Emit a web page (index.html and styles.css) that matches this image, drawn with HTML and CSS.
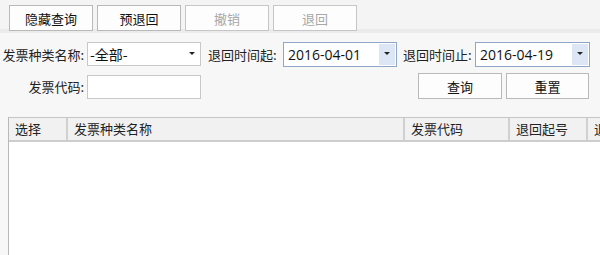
FILE: index.html
```html
<!DOCTYPE html>
<html lang="zh-CN">
<head>
    <meta charset="UTF-8">
    <title>发票退回</title>
    <link rel="stylesheet" href="styles.css">
</head>
<body>
    <div class="toolbar">
        <button class="tool-btn">隐藏查询</button>
        <button class="tool-btn">预退回</button>
        <button class="tool-btn" disabled>撤销</button>
        <button class="tool-btn" disabled>退回</button>
    </div>

    <div class="query">
        <div class="row">
            <label class="label wide">发票种类名称:</label>
            <div class="select">
                <span>-全部-</span>
                <span class="arrow"></span>
            </div>
            <label class="label mid">退回时间起:</label>
            <div class="date">
                <span>2016-04-01</span>
                <span class="drop"><span class="arrow"></span></span>
            </div>
            <label class="label mid2">退回时间止:</label>
            <div class="date last">
                <span>2016-04-19</span>
                <span class="drop"><span class="arrow"></span></span>
            </div>
        </div>
        <div class="row second">
            <label class="label wide">发票代码:</label>
            <div class="text-input"></div>
            <div class="actions">
                <button class="btn">查询</button>
                <button class="btn">重置</button>
            </div>
        </div>
    </div>

    <div class="grid">
        <div class="grid-head">
            <div class="col c1">选择</div>
            <div class="col c2">发票种类名称</div>
            <div class="col c3">发票代码</div>
            <div class="col c4">退回起号</div>
            <div class="col c5">退回止号</div>
        </div>
        <div class="grid-body"></div>
    </div>
</body>
</html>
```

FILE: styles.css
```css
body {
    margin: 0;
    width: 600px;
    height: 255px;
    overflow: hidden;
    background-color: #f7f7f7;
    font-family: "Microsoft YaHei", "Noto Sans CJK SC", sans-serif;
    font-size: 13px;
    color: #111;
}

.toolbar {
    height: 33px;
    padding: 5px 0 0 9px;
    box-sizing: border-box;
    display: flex;
    gap: 4px;
    background-color: #f4f4f4;
    border-bottom: 4px solid #ebebeb;
}

.tool-btn, .btn {
    flex: none;
    width: 84px;
    height: 26px;
    padding: 0;
    background-color: #fdfdfd;
    border: 1px solid #b9b9b9;
    font-family: inherit;
    font-size: 13px;
    color: #111;
}

.tool-btn:disabled {
    color: #a8a8a8;
    border-color: #c6c6c6;
}

.query {
    padding: 9px 0 0 2px;
}

.row {
    display: flex;
    align-items: center;
    height: 24px;
}

.row > * {
    flex: none;
}

.row.second {
    margin-top: 7px;
    height: 26px;
}

.label {
    color: #222;
    white-space: nowrap;
}

.wide {
    width: 82px;
    margin-right: 3px;
    text-align: right;
}

.mid {
    margin-left: 7px;
    width: 72px;
    margin-right: 3px;
}

.mid2 {
    margin-left: 6px;
    width: 69px;
    margin-right: 3px;
}

.select, .text-input {
    width: 114px;
    height: 24px;
    box-sizing: border-box;
    background-color: #fff;
    border: 1px solid #c8c8c8;
}

.select {
    display: flex;
    align-items: center;
    justify-content: space-between;
    padding: 0 5px 0 2px;
    font-size: 14px;
}

.text-input {
    margin-top: 1px;
}

.arrow {
    width: 0;
    height: 0;
    border-left: 3px solid transparent;
    border-right: 3px solid transparent;
    border-top: 3px solid #222;
    margin-top: -2px;
}

.date {
    width: 114px;
    height: 25px;
    box-sizing: border-box;
    display: flex;
    align-items: center;
    justify-content: space-between;
    padding: 1px 1px 1px 4px;
    background-color: #fff;
    border: 1px solid #8fa6c6;
    font-family: "Segoe UI", "Open Sans", "Noto Sans", sans-serif;
    font-size: 14px;
}

.date.last {
    width: 115px;
}

.drop {
    width: 16px;
    height: 21px;
    display: flex;
    align-items: center;
    justify-content: center;
    background-color: #dce6f4;
}

.actions {
    display: flex;
    gap: 4px;
    margin-left: 217px;
}

.actions .btn:last-child {
    width: 83px;
}

.grid {
    margin: 18px 0 0 8px;
    width: 592px;
    height: 200px;
    overflow: hidden;
    background-color: #fff;
    border-left: 1px solid #b8b8b8;
}

.grid-head {
    display: flex;
    width: 680px;
    height: 25px;
    box-sizing: border-box;
    background-color: #f1f1f1;
    border-top: 1px solid #c6c6c6;
    border-bottom: 2px solid #cdcdcd;
}

.col {
    flex: none;
    box-sizing: border-box;
    padding-left: 6px;
    line-height: 22px;
    color: #222;
    border-right: 2px solid #d0d0d0;
    white-space: nowrap;
}

.c1 { width: 59px; }
.c2 { width: 337px; }
.c3 { width: 105px; }
.c4 { width: 78px; }
.c5 { width: 90px; }
```
